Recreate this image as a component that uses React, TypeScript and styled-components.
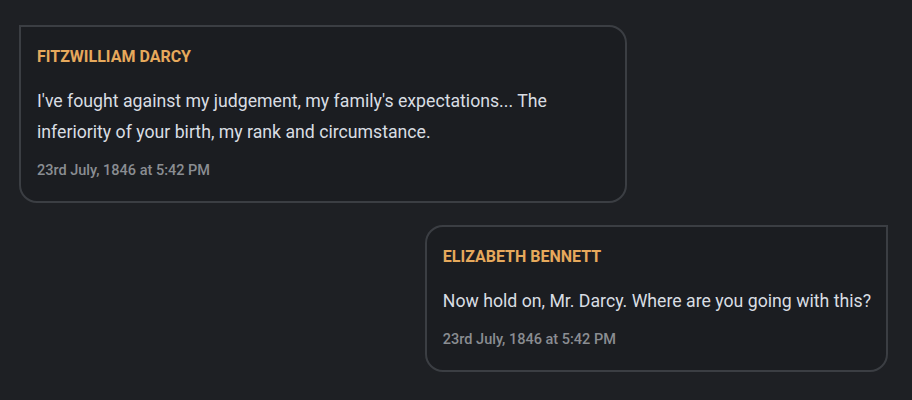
import React from "react";
import styled, { createGlobalStyle } from "styled-components";

const Global = createGlobalStyle`
  html, body { margin: 0; padding: 0; background: #1e2024; }
  body { font-family: Roboto, "Noto Sans", sans-serif; }
`;

const Thread = styled.div`
  display: flex;
  flex-direction: column;
  gap: 22px;
  padding: 25px 24px 24px 19px;
  box-sizing: border-box;
  width: 912px;
  min-height: 400px;
  background: #1e2024;
`;

const Bubble = styled.div<{ $mine?: boolean }>`
  align-self: ${(p) => (p.$mine ? "flex-end" : "flex-start")};
  max-width: 70%;
  box-sizing: border-box;
  background: #1b1d21;
  border: 2px solid #3b3e43;
  border-radius: ${(p) => (p.$mine ? "18px 0 18px 18px" : "0 18px 18px 18px")};
  padding: 16px 15px 18px 16px;
`;

const Name = styled.div`
  color: #e6a95c;
  font-weight: 700;
  font-size: 16px;
  line-height: 28px;
`;

const Body = styled.p`
  margin: 14.5px 0 0;
  color: #d9dde3;
  font-size: 17.7px;
  line-height: 31px;
`;

const Stamp = styled.div`
  margin-top: 11.5px;
  color: #8a8d92;
  font-size: 14.5px;
  font-weight: 500;
  line-height: 24px;
`;

const messages = [
  {
    name: "FITZWILLIAM DARCY",
    text: "I've fought against my judgement, my family's expectations... The inferiority of your birth, my rank and circumstance.",
    time: "23rd July, 1846 at 5:42 PM",
    mine: false,
  },
  {
    name: "ELIZABETH BENNETT",
    text: "Now hold on, Mr. Darcy. Where are you going with this?",
    time: "23rd July, 1846 at 5:42 PM",
    mine: true,
  },
];

export default function App() {
  return (
    <>
      <Global />
      <Thread>
        {messages.map((m, i) => (
          <Bubble key={i} $mine={m.mine}>
            <Name>{m.name}</Name>
            <Body>{m.text}</Body>
            <Stamp>{m.time}</Stamp>
          </Bubble>
        ))}
      </Thread>
    </>
  );
}
